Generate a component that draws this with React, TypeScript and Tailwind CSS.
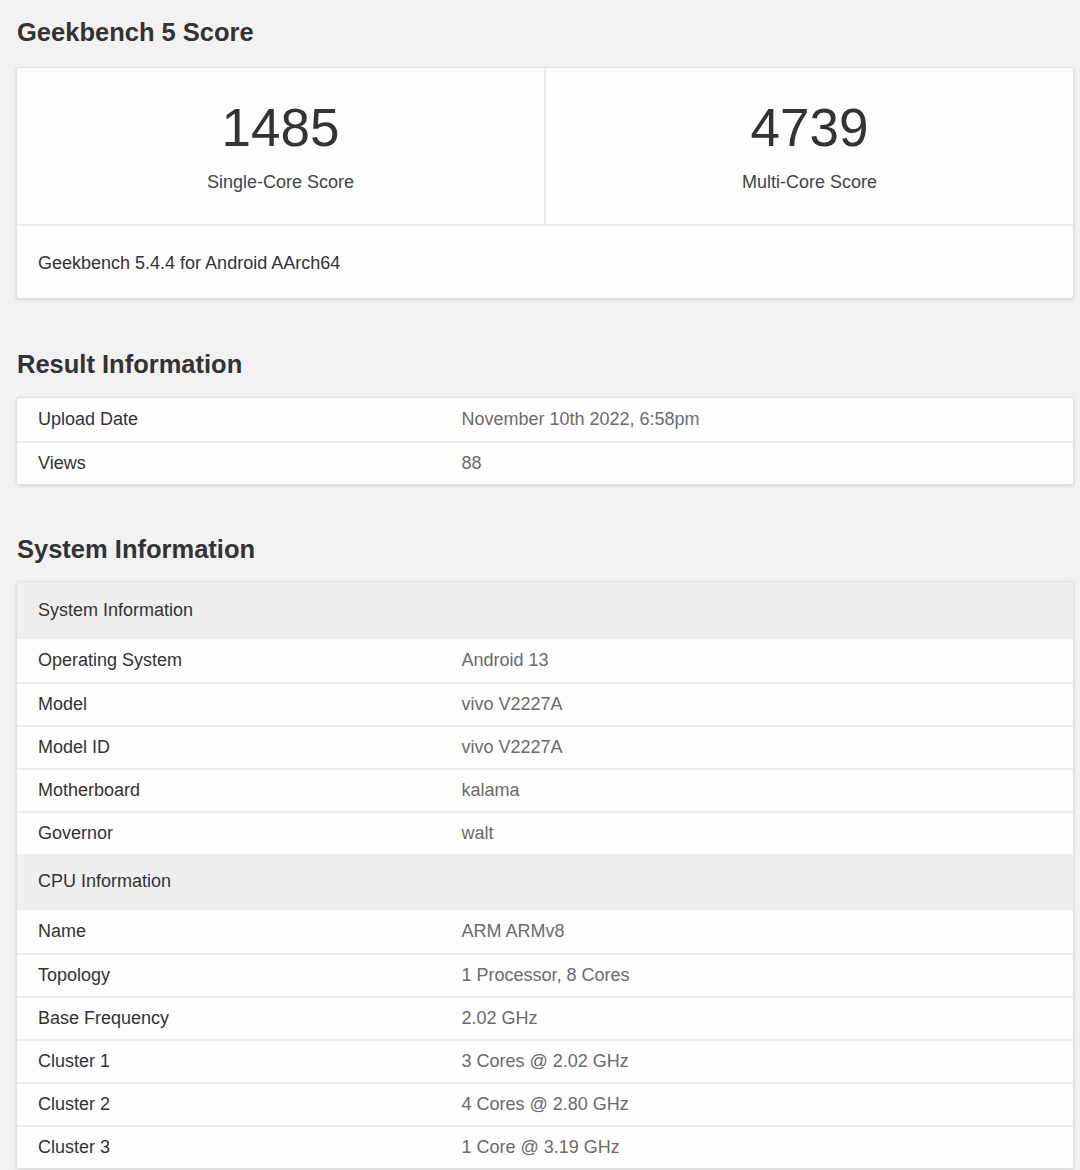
import React from "react";

type Row = [string, string];

const resultRows: Row[] = [
  ["Upload Date", "November 10th 2022, 6:58pm"],
  ["Views", "88"],
];

const systemRows: Row[] = [
  ["Operating System", "Android 13"],
  ["Model", "vivo V2227A"],
  ["Model ID", "vivo V2227A"],
  ["Motherboard", "kalama"],
  ["Governor", "walt"],
];

const cpuRows: Row[] = [
  ["Name", "ARM ARMv8"],
  ["Topology", "1 Processor, 8 Cores"],
  ["Base Frequency", "2.02 GHz"],
  ["Cluster 1", "3 Cores @ 2.02 GHz"],
  ["Cluster 2", "4 Cores @ 2.80 GHz"],
  ["Cluster 3", "1 Core @ 3.19 GHz"],
];

function Heading({ children }: { children: React.ReactNode }) {
  return <h2 className="text-[25.5px] font-bold leading-none text-[#333]">{children}</h2>;
}

function InfoRow({ row, first }: { row: Row; first?: boolean }) {
  return (
    <div className={"flex h-[43px] items-center bg-[#fdfdfd] " + (first ? "" : "border-t-2 border-[#ececec]")}>
      <div className="w-[40%] pl-[21px] text-[#333]">{row[0]}</div>
      <div className="flex-1 pl-[22px] text-[#6b6b6b]">{row[1]}</div>
    </div>
  );
}

function GroupHeader({ label, h }: { label: string; h: string }) {
  return (
    <div className={"flex items-center bg-[#efefef] pl-[21px] text-[#333] " + h}>{label}</div>
  );
}

export default function App() {
  return (
    <div
      className="min-h-[1170px] w-[1080px] bg-[#f2f2f2] pl-4 pr-[6px] pt-[20px] text-[18px]"
      style={{ fontFamily: '"Liberation Sans", Arial, sans-serif' }}
    >
      <div className="pl-px">
        <Heading>Geekbench 5 Score</Heading>
      </div>

      <div className="mt-[21px] overflow-hidden rounded-[3px] border border-[#e2e2e2] bg-[#fdfdfd] shadow-[0_1px_3px_rgba(0,0,0,0.12)]">
        <div className="flex h-[158px] border-b-2 border-[#ececec]">
          <div className="flex flex-1 flex-col items-center border-r-2 border-[#ececec] pt-[33px]">
            <div className="text-[53px] leading-none text-[#333]">1485</div>
            <div className="mt-[15px] text-[18px] text-[#444]">Single-Core Score</div>
          </div>
          <div className="flex flex-1 flex-col items-center pt-[33px]">
            <div className="text-[53px] leading-none text-[#333]">4739</div>
            <div className="mt-[15px] text-[18px] text-[#444]">Multi-Core Score</div>
          </div>
        </div>
        <div className="flex h-[72px] items-center pl-[21px] pt-[4px] text-[#333]">
          Geekbench 5.4.4 for Android AArch64
        </div>
      </div>

      <div className="mt-[53px] pl-px">
        <Heading>Result Information</Heading>
      </div>
      <div className="mt-[20px] overflow-hidden rounded-[3px] border border-[#e2e2e2] shadow-[0_1px_3px_rgba(0,0,0,0.12)]">
        {resultRows.map((r, i) => (
          <InfoRow key={r[0]} row={r} first={i === 0} />
        ))}
      </div>

      <div className="mt-[52px] pl-px">
        <Heading>System Information</Heading>
      </div>
      <div className="mt-[18px] overflow-hidden rounded-[3px] border border-[#e2e2e2] shadow-[0_1px_3px_rgba(0,0,0,0.12)]">
        <GroupHeader label="System Information" h="h-[57px]" />
        {systemRows.map((r, i) => (
          <InfoRow key={r[0]} row={r} first={i === 0} />
        ))}
        <GroupHeader label="CPU Information" h="h-[56px]" />
        {cpuRows.map((r, i) => (
          <InfoRow key={r[0]} row={r} first={i === 0} />
        ))}
      </div>
    </div>
  );
}
